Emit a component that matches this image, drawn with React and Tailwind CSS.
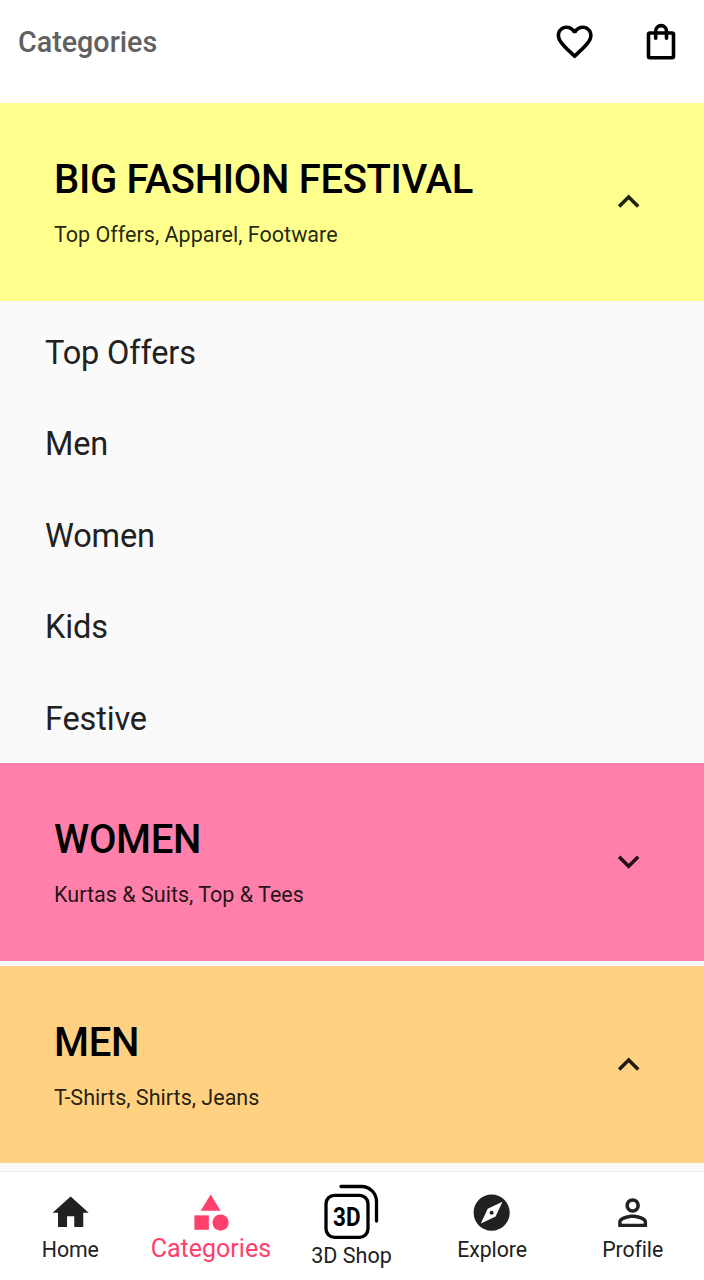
import React from "react";

function Icon({ children, className = "" }) {
  return (
    <svg viewBox="0 0 24 24" fill="currentColor" className={`block h-[43.3px] w-[43.3px] shrink-0 ${className}`}>
      {children}
    </svg>
  );
}

function Banner({ title, subtitle, open, className }) {
  return (
    <section className={`flex items-center justify-between pr-[54px] pl-[54px] ${className}`}>
      <div className="flex flex-col gap-[18.5px] pt-[0.5px]">
        <h2 className="text-[40px] leading-[47px] font-medium tracking-[-0.33px] whitespace-nowrap text-black">{title}</h2>
        <p className="text-[21.55px] leading-[26px] whitespace-nowrap text-black/87">{subtitle}</p>
      </div>
      <Icon className="text-black/87">
        {open ? (
          <path d="M12 8l-6 6 1.41 1.41L12 10.83l4.59 4.58L18 14z" />
        ) : (
          <path d="M16.59 8.59L12 13.17 7.41 8.59 6 10l6 6 6-6z" />
        )}
      </Icon>
    </section>
  );
}

function Tab({ label, children }) {
  return (
    <a className="flex w-[140.6px] flex-col items-center pt-[18.5px] text-[#212121]">
      {children}
      <span className="mt-[3.5px] text-[21.3px] leading-[26px] tracking-[-0.1px] whitespace-nowrap">{label}</span>
    </a>
  );
}

const items = ["Top Offers", "Men", "Women", "Kids", "Festive"];

export default function App() {
  return (
    <div className="flex h-[1280px] w-[704px] flex-col overflow-hidden bg-[#fafafa] font-['Roboto',sans-serif]">
      <header className="flex h-[103px] shrink-0 items-start justify-between bg-white pt-[20px] pr-[21px] pl-[18px]">
        <h1 className="text-[28.7px] leading-[44px] font-medium text-[#616161]">Categories</h1>
        <div className="flex items-start gap-[43.5px]">
          <Icon className="text-black">
            <path d="M16.5 3c-1.74 0-3.41.81-4.5 2.09C10.91 3.81 9.24 3 7.5 3 4.42 3 2 5.42 2 8.5c0 3.78 3.4 6.86 8.55 11.54L12 21.35l1.45-1.32C18.6 15.36 22 12.28 22 8.5 22 5.42 19.58 3 16.5 3zm-4.4 15.55l-.1.1-.1-.1C7.14 14.24 4 11.39 4 8.5 4 6.5 5.5 5 7.5 5c1.54 0 3.04.99 3.57 2.36h1.87C13.46 5.99 14.96 5 16.5 5c2 0 3.5 1.5 3.5 3.5 0 2.89-3.14 5.74-7.9 10.05z" />
          </Icon>
          <svg viewBox="0 0 43 43" fill="none" stroke="black" strokeWidth="3.6" strokeLinecap="round" strokeLinejoin="round" className="block h-[43px] w-[43px]">
            <rect x="8.5" y="13" width="25" height="24.7" rx="1.5" />
            <path d="M15.7 18.3V11a5.4 5.4 0 0 1 10.8 0v7.3" />
          </svg>
        </div>
      </header>

      <Banner title="BIG FASHION FESTIVAL" subtitle="Top Offers, Apparel, Footware" open className="h-[197.5px] shrink-0 bg-[#ffff8d]" />

      <ul className="flex h-[462.5px] shrink-0 flex-col pt-[6.8px] pl-[45px]">
        {items.map((item) => (
          <li key={item} className="flex h-[91.5px] shrink-0 items-center text-[32.5px] tracking-[-0.14px] text-[#212121]">
            {item}
          </li>
        ))}
      </ul>

      <Banner title="WOMEN" subtitle="Kurtas & Suits, Top & Tees" className="h-[197.5px] shrink-0 bg-[#ff80ab]" />
      <Banner title="MEN" subtitle="T-Shirts, Shirts, Jeans" open className="mt-[5.5px] h-[197px] shrink-0 bg-[#ffd180]" />

      <nav className="mt-auto flex h-[109px] shrink-0 border-t border-[#eeeeee] bg-white">
        <Tab label="Home">
          <Icon><path d="M10 20v-6h4v6h5v-8h3L12 3 2 12h3v8z" /></Icon>
        </Tab>
        <a className="flex w-[140.6px] flex-col items-center pt-[18.5px] text-[#ff3f6c]">
          <Icon>
            <path d="M12 2l-5.5 9h11z" />
            <circle cx="17.5" cy="17.5" r="4.5" />
            <path d="M3 13.5h8v8H3z" />
          </Icon>
          <span className="text-[25px] leading-[30px] whitespace-nowrap">Categories</span>
        </a>
        <a className="flex w-[140.6px] flex-col items-center pt-[11px] text-[#212121]">
          <svg viewBox="0 0 56 56" fill="none" stroke="black" strokeWidth="3.3" strokeLinecap="round" className="block h-[56px] w-[56px]">
            <rect x="3" y="12.3" width="42" height="42" rx="8.5" />
            <path d="M18 3.5h20.5a15 15 0 0 1 15 15V38" />
            <text x="10" y="42.5" textLength="27.5" lengthAdjust="spacingAndGlyphs" fontSize="26" fontWeight="700" fill="black" stroke="none">3D</text>
          </svg>
          <span className="mt-[4px] text-[21.5px] leading-[26px] whitespace-nowrap">3D Shop</span>
        </a>
        <Tab label="Explore">
          <Icon><path d="M12 10.9c-.61 0-1.1.49-1.1 1.1s.49 1.1 1.1 1.1c.61 0 1.1-.49 1.1-1.1s-.49-1.1-1.1-1.1zM12 2C6.48 2 2 6.48 2 12s4.48 10 10 10 10-4.48 10-10S17.52 2 12 2zm2.19 12.19L6 18l3.81-8.19L18 6l-3.81 8.19z" /></Icon>
        </Tab>
        <Tab label="Profile">
          <Icon><path d="M12 5.9c1.16 0 2.1.94 2.1 2.1s-.94 2.1-2.1 2.1S9.9 9.16 9.9 8s.94-2.1 2.1-2.1m0 9c2.97 0 6.1 1.46 6.1 2.1v1.1H5.9V17c0-.64 3.13-2.1 6.1-2.1M12 4C9.79 4 8 5.79 8 8s1.79 4 4 4 4-1.79 4-4-1.79-4-4-4zm0 9c-2.67 0-8 1.34-8 4v3h16v-3c0-2.66-5.33-4-8-4z" /></Icon>
        </Tab>
      </nav>
    </div>
  );
}
